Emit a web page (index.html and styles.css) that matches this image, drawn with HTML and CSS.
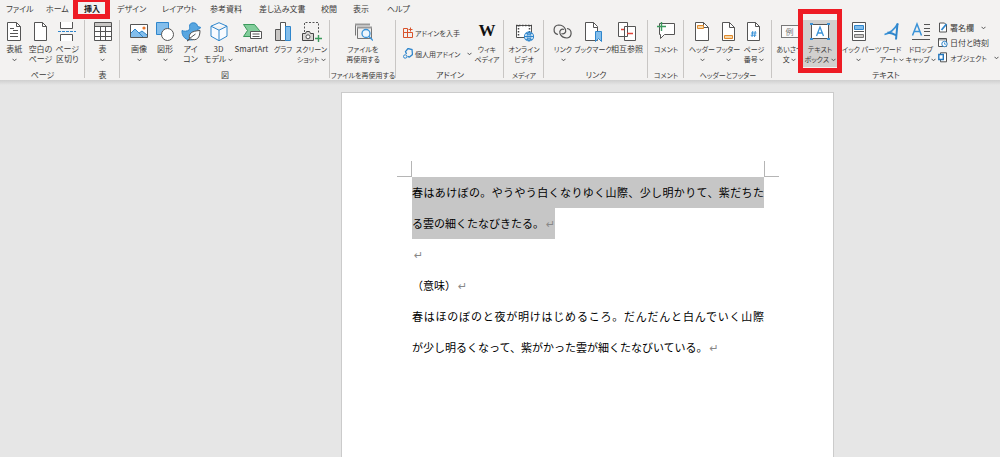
FILE: index.html
```html
<!DOCTYPE html>
<html lang="ja">
<head>
<meta charset="utf-8">
<title>文書</title>
<link rel="stylesheet" href="styles.css">
</head>
<body>
<svg class="defs" aria-hidden="true">
  <symbol id="chev" viewBox="0 0 5 4"><path d="M.5.8l2 2 2-2" fill="none" stroke="#555"/></symbol>
</svg>
<header class="ribbon">
  <nav class="tabs">
    <button>ファイル</button>
    <button>ホーム</button>
    <button class="active">挿入</button>
    <button>デザイン</button>
    <button>レイアウト</button>
    <button>参考資料</button>
    <button>差し込み文書</button>
    <button>校閲</button>
    <button>表示</button>
    <button>ヘルプ</button>
  </nav>
  <div class="groups">
    <section class="group g-page">
      <div class="tools">
        <button class="tool"><svg viewBox="0 0 20 20"><path class="w" d="M3.500.5h9l4 4v14h-13z"/><path class="k" d="M12.500.5v4h4"/><path class="k" d="M6 6.500h4M9 8.500h5M6 11.500h8M6 14.500h8"/></svg><span>表紙<br><svg class="chev"><use href="#chev"/></svg></span></button>
        <button class="tool"><svg viewBox="0 0 20 20"><path class="w" d="M4.500.5h8l4 4v14h-12z"/><path class="k" d="M12.500.5v4h4"/></svg><span>空白の<br>ページ</span></button>
        <button class="tool"><svg viewBox="0 0 20 20"><path class="w" d="M3.500 0v6.500h12V0M3.500 19v-6.500h12V19"/><path class="b" d="M1 9.500h18" stroke-dasharray="3 1"/></svg><span>ページ<br>区切り</span></button>
      </div>
      <h2>ページ</h2>
    </section>
    <section class="group g-table">
      <div class="tools">
        <button class="tool"><svg viewBox="0 0 20 20"><path class="w" d="M1.500 .5h17v18h-17z"/><path d="M2 1h16v3H2z" fill="#c8c6c4"/><path class="k" d="M1.500 4.500h17M1.500 9.500h17M1.500 14.500h17M7.500 4.500v14M12.500 4.500v14"/></svg><span>表<br><svg class="chev"><use href="#chev"/></svg></span></button>
      </div>
      <h2>表</h2>
    </section>
    <section class="group g-figure">
      <div class="tools">
        <button class="tool"><svg viewBox="0 0 20 20"><path class="w" d="M1.500 2.500h17v13h-17z"/><path d="M2 11l4-4 4 4 3-2 5 4v2H2z" fill="#83beec"/><path class="b" d="M2 11l4-4 8 8M10 11l3-2 5 4"/><circle cx="15" cy="6" r="1.600" fill="#e8742a"/></svg><span>画像<br><svg class="chev"><use href="#chev"/></svg></span></button>
        <button class="tool"><svg viewBox="0 0 20 20"><path d="M1.500.5h12v12h-12z" fill="#83beec" stroke="#2f86cc"/><circle class="w" cx="12.500" cy="12.500" r="6"/></svg><span>図形<br><svg class="chev"><use href="#chev"/></svg></span></button>
        <button class="tool"><svg viewBox="0 0 20 20"><path d="M1 8.500c2 1 5 1 7-.5 1-1 .5-2 .5-3.500C8.500 2 10 .8 12.500.8s4 1.700 4 3.700l3 .8c0 1.200-1.200 2-3 2 2 2 2.500 9-5 10.500C5 19 .5 14.500 1 8.500z" fill="#58a6e0" stroke="#2f86cc"/><path class="w" d="M6 19l2.500-2.500c-1-5 2-7.500 10.500-8 0 7-3 11-9.500 8.500zM8.500 16.500l6-4.500"/></svg><span>アイ<br>コン</span></button>
        <button class="tool"><svg viewBox="0 0 20 20"><path d="M10 .7l8 3.500v10l-8 4.500-8-4.500v-10zM2 4.200l8 4 8-4M10 8.200v10.500" fill="#f8fbff" stroke="#2f86cc"/></svg><span>3D<br>モデル <svg class="chev"><use href="#chev"/></svg></span></button>
        <button class="tool"><svg viewBox="0 0 20 20"><path d="M1.500 2.500h11l5 6-2 6h-14l4-6z" fill="#82cd9b" stroke="#3b9a5c"/><path class="w" d="M8.500 9.500h11v7h-11z"/><path class="k" d="M10.500 12h7M10.500 14.500h7"/></svg><span>SmartArt</span></button>
        <button class="tool"><svg viewBox="0 0 20 20"><path d="M2.500 7.500h5v11h-5z" fill="#c8c6c4" stroke="#555"/><path class="w" d="M7.500.5h5v18h-5z"/><path d="M12.500 4.500h5v14h-5z" fill="#83beec" stroke="#2f86cc"/></svg><span class="narrow">グラフ</span></button>
        <button class="tool"><svg viewBox="0 0 20 20"><path class="k" d="M2.500 10V.5h14V12" stroke-dasharray="2 1.500"/><path d="M.5 11.500h3l1-2h3l1 2h3v7H.5z" fill="#d8d6d4" stroke="#444"/><circle class="w" cx="6" cy="14.800" r="2"/><path d="M16.500 13v7M13 16.500h7" stroke="#3b9a5c" stroke-width="1.400"/></svg><span class="narrow">スクリーン<br>ショット <svg class="chev"><use href="#chev"/></svg></span></button>
      </div>
      <h2>図</h2>
    </section>
    <section class="group g-reuse">
      <div class="tools">
        <button class="tool"><svg viewBox="0 0 20 20"><path d="M2.500 13.500v-11h14M4.500 16.500v-11h14v11z" fill="#eee" stroke="#777"/><path d="M2 2.500h15M4 5.500h15" stroke="#999" stroke-width="2"/><circle cx="13" cy="11.500" r="4" fill="#eef6fd" stroke="#3a93d8" stroke-width="1.300"/><path d="M16 14.500l4 4" stroke="#3a93d8" stroke-width="1.500"/></svg><span class="narrow">ファイルを<br>再使用する</span></button>
      </div>
      <h2 class="narrow">ファイルを再使用する</h2>
    </section>
    <section class="group g-addin">
      <div class="tools">
        <div class="list addins">
          <button class="narrow"><svg viewBox="0 0 10 11"><path d="M.5 1.500h4v4h-4zM.5 5.500h4v5h-4zM4.500 5.500h5v5h-5zM7.500 .5v4M5.500 2.500h4" fill="none" stroke="#d8532b"/></svg>アドインを入手</button>
          <button class="narrow"><svg viewBox="0 0 10 11"><path d="M3.500 6L2.500 3.500l2.500-3 4 1 .5 5-3 2.500-2-.5" fill="none" stroke="#2f86cc" stroke-width="1.300"/><circle cx="2.200" cy="8.500" r="1.700" fill="none" stroke="#2f86cc"/></svg>個人用アドイン<svg class="chev far"><use href="#chev"/></svg></button>
        </div>
        <button class="tool"><b class="wiki">W</b><span class="narrow">ウィキ<br>ペディア</span></button>
      </div>
      <h2>アドイン</h2>
    </section>
    <section class="group g-media">
      <div class="tools">
        <button class="tool"><svg viewBox="0 0 20 20"><path class="w" d="M2.500 3.500h15v12h-15z"/><path d="M4.500 3v13M15.500 3v8M2 3.500h16" stroke="#444" stroke-width="1.500" stroke-dasharray="1.500 1.500"/><circle cx="15" cy="14.500" r="4.500" fill="#fff" stroke="#2f86cc" stroke-width="1.200"/><path d="M10.500 14.500h9M15 10v9M12 11.500q3 1.500 6 0M12 17.500q3-1.500 6 0" fill="none" stroke="#2f86cc"/><ellipse cx="15" cy="14.500" rx="2" ry="4.500" fill="none" stroke="#2f86cc"/></svg><span class="narrow">オンライン<br>ビデオ</span></button>
      </div>
      <h2 class="narrow">メディア</h2>
    </section>
    <section class="group g-link">
      <div class="tools">
        <button class="tool"><svg viewBox="0 0 20 20"><g fill="none" stroke="#555" stroke-width="1.200"><path d="M5 12.500A4.800 4.800 0 0 1 5.500 3c3 0 6 2 7 4.500 1 3-1.500 5-4 4"/><path d="M14 6.500a4.800 4.800 0 0 1 0 9.500c-3 0-6-2-7-4.500-1-3 1.500-5 4-4"/></g></svg><span class="narrow">リンク<br><svg class="chev"><use href="#chev"/></svg></span></button>
        <button class="tool"><svg viewBox="0 0 20 20"><path class="w" d="M2.500.5h8l4 4v14h-12z"/><path class="k" d="M10.500.5v5h4"/><path d="M12.500 9.500h6v10l-3-3-3 3z" fill="#83beec" stroke="#2f86cc"/></svg><span class="narrow">ブックマーク</span></button>
        <button class="tool"><svg viewBox="0 0 20 20"><path class="w" d="M1.500.5h9v14h-9zM7.500 4.500h11v14h-11z"/><path d="M4 7.500h3M10 11.500h6" stroke="#e0453a" stroke-width="1.300"/></svg><span>相互参照</span></button>
      </div>
      <h2>リンク</h2>
    </section>
    <section class="group g-comment">
      <div class="tools">
        <button class="tool"><svg viewBox="0 0 20 20"><path class="w" d="M3.500 1.500h15v11h-10l-4 4v-4h-1z"/><path d="M5.500 0v9M1 4.500h9" stroke="#3b9a5c" stroke-width="1.400"/></svg><span class="narrow">コメント</span></button>
      </div>
      <h2 class="narrow">コメント</h2>
    </section>
    <section class="group g-header">
      <div class="tools">
        <button class="tool"><svg viewBox="0 0 20 20"><path class="w" d="M3.500.5h8l5 5v13h-13z"/><path class="k" d="M11.500.5v5h5"/><path d="M5.500 3.500h6v3h-6z" fill="#f7d7a8" stroke="#e08a2c"/></svg><span class="narrow">ヘッダー<br><svg class="chev"><use href="#chev"/></svg></span></button>
        <button class="tool"><svg viewBox="0 0 20 20"><path class="w" d="M4.500.5h7l5 5v13h-12z"/><path class="k" d="M11.500.5v5h5"/><path d="M6.500 13.500h8v3h-8z" fill="#f7d7a8" stroke="#e08a2c"/></svg><span class="narrow">フッター<br><svg class="chev"><use href="#chev"/></svg></span></button>
        <button class="tool"><svg viewBox="0 0 20 20"><path class="w" d="M3.500.5h8l4 4v14h-12z"/><path class="k" d="M11.500.5v4h4"/><path d="M8.800 9l-.8 6M11.300 9l-.8 6M7 11h5.500M6.700 13.200h5.500" stroke="#3a93d8"/></svg><span class="narrow">ページ<br>番号 <svg class="chev"><use href="#chev"/></svg></span></button>
      </div>
      <h2 class="narrow">ヘッダーとフッター</h2>
    </section>
    <section class="group g-text">
      <div class="tools">
        <button class="tool"><span class="sample">例</span><span class="narrow">あいさつ<br>文 <svg class="chev"><use href="#chev"/></svg></span></button>
        <button class="tool selected"><svg viewBox="0 0 20 20"><path class="w" d="M1.500 2.500h17v14h-17z"/><path d="M6.500 14L10 5l3.500 9M7.800 11h4.500" fill="none" stroke="#3a93d8" stroke-width="1.300"/><path d="M0 1h3v2H0zM17 1h3v2h-3zM0 16h3v2H0zM17 16h3v2h-3z" fill="#3a93d8"/></svg><span class="narrow">テキスト<br>ボックス <svg class="chev"><use href="#chev"/></svg></span></button>
        <button class="tool"><svg viewBox="0 0 20 20"><path class="w" d="M3.500.5h13v18h-13z"/><path d="M5.500 3.500h9v4h-9z" fill="#83beec" stroke="#2f86cc"/><path class="k" d="M5 9.500h10"/><path d="M5.500 12.500h9v3h-9z" fill="#c8c6c4" stroke="#777"/></svg><span class="narrow">クイック パーツ<br><svg class="chev"><use href="#chev"/></svg></span></button>
        <button class="tool"><svg viewBox="0 0 20 20"><path d="M16 1.500C12 8 8 11.500 2.500 12.500" fill="none" stroke="#3a93d8" stroke-width="1.700"/><path d="M15.500 1.500L14 17.500M5.500 10.500q5 .5 9 3" fill="none" stroke="#2f86cc" stroke-width="2"/></svg><span class="narrow">ワード<br>アート <svg class="chev"><use href="#chev"/></svg></span></button>
        <button class="tool"><svg viewBox="0 0 20 20"><path d="M1.500 13.500L6 2l4.500 11.500M3 9.500h6" fill="none" stroke="#3a93d8" stroke-width="1.500"/><path class="k" d="M13 2.500h6M13 6.500h6M13 9.500h6M13 13.500h6M1 17.500h18"/></svg><span class="narrow">ドロップ<br>キャップ <svg class="chev"><use href="#chev"/></svg></span></button>
        <div class="list objects">
          <button><svg viewBox="0 0 10 11"><path class="w" d="M1.500 1h5l2 2v7h-7z"/><path d="M3.500 8l5-6" stroke="#2f86cc" stroke-width="1.800"/></svg>署名欄<svg class="chev far"><use href="#chev"/></svg></button>
          <button><svg viewBox="0 0 10 11"><path class="w" d="M.5 1.500h8v8h-8z"/><path d="M.5 2.500h8" stroke="#555" stroke-width="2" stroke-dasharray="1 1"/><circle cx="6.500" cy="7" r="2.700" fill="#fff" stroke="#2f86cc"/><path d="M6.500 5.500v1.700h1.500" fill="none" stroke="#2f86cc" stroke-width=".8"/></svg>日付と時刻</button>
          <button class="narrow"><svg viewBox="0 0 10 11"><path class="w" d="M2.500.8h6v9h-6z"/><path d="M.8 2.500h4.500v5H.8z" fill="#fff" stroke="#2477bd" stroke-width="1.400"/></svg>オブジェクト<svg class="chev far"><use href="#chev"/></svg></button>
        </div>
      </div>
      <h2>テキスト</h2>
    </section>
  </div>
</header>
<main class="workspace">
  <article class="page">
    <div class="corners"><i></i><i></i></div>
    <p><mark><span class="full">春はあけぼの。やうやう白くなりゆく山際、少し明かりて、紫だちた</span><span class="rest">る雲の細くたなびきたる。<span class="ret">↵</span></span></mark></p>
    <p><span class="ret">↵</span></p>
    <p>（意味）<span class="ret">↵</span></p>
    <p><span class="full">春はほのぼのと夜が明けはじめるころ。だんだんと白んでいく山際</span>が少し明るくなって、紫がかった雲が細くたなびいている。<span class="ret">↵</span></p>
  </article>
</main>
</body>
</html>
```
FILE: styles.css
```css
* { box-sizing: border-box; }
body {
  margin: 0;
  min-height: 100vh;
  display: flex;
  flex-direction: column;
  background: #e6e6e6;
  color: #3b3a39;
  font-family: "Noto Sans CJK JP", sans-serif;
  font-size: 8px;
  overflow-x: hidden;
}
.defs { display: none; }
button {
  margin: 0;
  padding: 0;
  border: 0;
  background: none;
  color: inherit;
  font: inherit;
  white-space: nowrap;
}
.ribbon {
  background: #f3f2f1;
  font-feature-settings: "palt";
}
.tabs {
  display: grid;
  grid-template-columns: 40px 38px 33px 45px 48px 49px 62px 32px 34px auto;
  justify-content: start;
  padding-left: 6px;
  height: 20px;
}
.tabs button {
  position: relative;
  justify-self: start;
  height: 17px;
  line-height: 17px;
}
.tabs .active { font-weight: 700; color: #222; }
.tabs .active::after {
  content: "";
  position: absolute;
  inset: -3px -10px -2px -11px;
  border: 5px solid #ee1c25;
}
.groups {
  display: grid;
  grid-template-columns: 85fr 35fr 210fr 66fr 108fr 40fr 104fr 36fr 88fr 228fr;
}
.group {
  display: flex;
  flex-direction: column;
  min-width: 0;
  height: 60px;
  position: relative;
}
.group:not(:last-child)::after {
  content: "";
  position: absolute;
  top: 0;
  right: 0;
  width: 1px;
  height: 58px;
  background: #c8c6c4;
}
.group h2 {
  margin: 0;
  font-size: 8px;
  font-weight: 400;
  line-height: 10px;
  text-align: center;
  white-space: nowrap;
}
.tools {
  display: grid;
  height: 50px;
  grid-template-columns: minmax(0, 1fr);
}
.g-page .tools { grid-template-columns: 26fr 26fr 27fr; padding: 0 4px 0 1px; }
.g-figure .tools { grid-template-columns: 26fr 26fr 25fr 31fr 35fr 28fr 29fr; padding: 0 4px 0 6px; }
.g-addin .tools { grid-template-columns: 67fr 34fr; padding-left: 7px; }
.g-link .tools { grid-template-columns: 26fr 34fr 34fr; padding: 0 4px 0 6px; }
.g-header .tools { grid-template-columns: 1fr 1fr 1fr; padding: 0 5px; }
.g-text .tools { grid-template-columns: 27fr 34fr 43fr 24fr 34fr 62fr; padding-left: 4px; }
.tool {
  display: flex;
  flex-direction: column;
  align-items: center;
  min-width: 0;
  height: 47px;
  padding-top: 2px;
  line-height: 10px;
}
.tool > svg { flex: none; width: 20px; height: 20px; }
.tool > span { margin-top: 2px; }
.ribbon .narrow { font-size: 7px; }
.w { fill: #fff; stroke: #555; }
.k { fill: none; stroke: #555; }
.b { fill: none; stroke: #2f86cc; }
.chev { width: 5px; height: 4px; vertical-align: middle; }
.chev.far { margin-left: 7px; }
.wiki {
  height: 20px;
  font: 700 17px/18px "Liberation Serif", serif;
  color: #111;
}
.tool .sample {
  width: 18px;
  height: 13px;
  margin: 3px 0 4px;
  border: 1px solid #777;
  background: #fafafa;
  color: #777;
  line-height: 11px;
}
.selected { position: relative; background: #d2d0ce; }
.selected::after {
  content: "";
  position: absolute;
  inset: -11px -5px -6px;
  border: 5px solid #ee1c25;
  z-index: 1;
}
.list {
  display: flex;
  flex-direction: column;
  align-items: start;
  min-width: 0;
}
.list button { display: flex; align-items: center; }
.list button > svg:first-child { width: 10px; height: 11px; margin-right: 2px; }
.addins { gap: 10px; padding-top: 7px; }
.addins button { height: 11px; }
.objects { gap: 4px; padding-top: 2px; }
.objects button { height: 11px; }
.workspace {
  flex: 1;
  display: grid;
  grid-template-columns: 341fr 493px 166fr;
  padding-top: 12px;
  background: linear-gradient(#cfcfcf, #e6e6e6 5px);
}
.page {
  grid-column: 2;
  padding: 68px 69px 0 70px;
  border: 1px solid #cbcbcb;
  border-bottom: 0;
  background: #fff;
  color: #000;
  font-size: 11px;
  line-height: 31px;
}
.corners {
  display: flex;
  justify-content: space-between;
  margin: 0 -15px;
}
.corners i {
  width: 15px;
  height: 16px;
  border: solid #b5b5b5;
  border-width: 0 1px 1px 0;
}
.corners i:last-child { border-width: 0 0 1px 1px; }
.page p { margin: 0; }
.full { display: block; text-align: justify; text-align-last: justify; }
mark { background: none; color: inherit; }
mark .full, mark .rest { background: #c6c6c6; }
.rest { display: table; }
.ret {
  margin-left: 2px;
  color: #888;
  font-family: "DejaVu Sans", sans-serif;
  line-height: 1;
}
```
